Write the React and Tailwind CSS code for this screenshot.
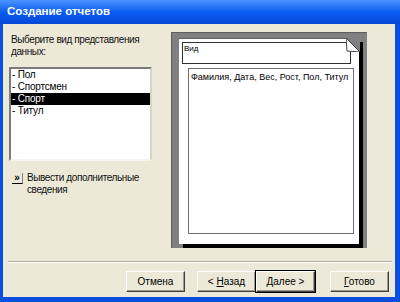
import React from "react";

const Btn = ({ children, def }) => (
  <div
    className={
      "w-[59px] h-[21px] flex items-center justify-center text-[10px] text-black bg-[#ece9d8] border border-t-white border-l-white border-b-[#404040] border-r-[#404040] shadow-[inset_-1px_-1px_0_#9c9a8f] " +
      (def ? "outline outline-1 outline-black" : "")
    }>
    <span>{children}</span>
  </div>
);

const Item = ({ text, sel }) => (
  <div className={"h-[12px] leading-[12px] pl-[1px] text-[10px] tracking-[-0.2px] " + (sel ? "bg-black text-white" : "text-black")}>
    {text}
  </div>
);

function App() {
  return (
    <div className="w-[400px] h-[302px] flex flex-col bg-[#0a4fe0] font-['Liberation_Sans',Arial,sans-serif] overflow-hidden">
      <div className="h-[24px] shrink-0 bg-gradient-to-b from-[#4a95ff] via-[#0a5cf2] to-[#0548d6] pl-[7px] flex items-center text-white font-bold text-[11.5px]">
        Создание отчетов
      </div>
      <div className="flex-1 ml-[3px] mr-[5px] mb-[5px] bg-[#ece9d8] flex flex-col">
        <div className="flex pt-[8px] pl-[6px]">
          <div className="w-[143px] flex flex-col">
            <div className="mt-[2px] ml-[2px] text-[10px] leading-[12px] text-[#111] whitespace-nowrap tracking-[-0.4px]">
              Выберите вид представления
              <br />
              данных:
            </div>
            <div className="mt-[9px] h-[94px] bg-white border-2 border-t-[#7a7a7a] border-l-[#7a7a7a] border-b-[#f4f3ee] border-r-[#d8d5c7]">
              <Item text="- Пол" />
              <Item text="- Спортсмен" />
              <Item text="- Спорт" sel />
              <Item text="- Титул" />
            </div>
            <div className="mt-[11px] flex items-start gap-[4px] ml-[3px]">
              <div className="w-[11px] h-[11px] mt-[1px] flex items-center justify-center text-[10px] leading-none font-bold text-black border-b border-r border-b-black border-r-[#808080]">
                »
              </div>
              <div className="text-[10px] leading-[12px] text-[#111] whitespace-nowrap tracking-[-0.4px]">
                Вывести дополнительные
                <br />
                сведения
              </div>
            </div>
          </div>
          <div className="ml-[19px] w-[196px] h-[216px] bg-[#808080] border-t border-l border-t-[#5e5e5e] border-l-[#5e5e5e] pl-[7px] pt-[5px]">
            <div className="relative w-[180px] h-[206px] bg-white border-t border-t-[#606060] shadow-[4px_4px_0_#000] flex flex-col">
              <div className="mt-[3px] ml-[3px] w-[169px] h-[22px] border border-[#303030] pl-[1px] text-[8px] leading-[12px] text-black">
                Вид
              </div>
              <div className="mt-[4px] ml-[9px] w-[166px] h-[166px] border border-[#707070] pl-[2px] pt-[3px] text-[9px] leading-[11px] text-black whitespace-nowrap">
                Фамилия, Дата, Вес, Рост, Пол, Титул
              </div>
              <svg className="absolute -top-[1px] -right-[1px]" width="14" height="14" viewBox="0 0 14 14">
                <polygon points="0,0 14,0 14,14" fill="#808080" />
                <polygon points="0,0 14,14 1,13" fill="#fff" stroke="#404040" strokeWidth="1" />
              </svg>
            </div>
          </div>
        </div>
        <div className="mt-[13px] ml-[5px] mr-[3px] h-[2px] border-t border-t-[#aca899] border-b border-b-white" />
        <div className="mt-[8px] flex pl-[123px]">
          <Btn>Отмена</Btn>
          <div className="ml-[12px]">
            <Btn>
              {"< "}
              <span className="underline">Н</span>азад
            </Btn>
          </div>
          <Btn def>
            <span className="underline">Д</span>
            {"алее >"}
          </Btn>
          <div className="ml-[15px]">
            <Btn>
              <span className="underline">Г</span>отово
            </Btn>
          </div>
        </div>
      </div>
    </div>
  );
}

export default App;
